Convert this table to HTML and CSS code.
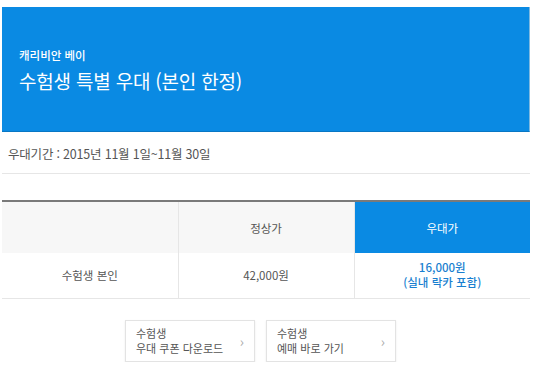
FILE: index.html
```html
<!DOCTYPE html>
<html lang="ko">
<head>
    <meta charset="UTF-8">
    <meta name="viewport" content="width=device-width, initial-scale=1.0">
    <title>수험생 특별 우대</title>
    <link rel="stylesheet" href="styles.css">
</head>
<body>
    <div class="wrap">
        <header class="hero">
            <p class="heroSub">캐리비안 베이</p>
            <h1 class="heroTitle">수험생 특별 우대 (본인 한정)</h1>
        </header>
        <p class="period">우대기간 : 2015년 11월 1일~11월 30일</p>

        <table class="priceTable">
            <thead>
                <tr>
                    <th></th>
                    <th>정상가</th>
                    <th class="sale">우대가</th>
                </tr>
            </thead>
            <tbody>
                <tr>
                    <td>수험생 본인</td>
                    <td>42,000원</td>
                    <td class="salePrice">16,000원<br>(실내 락카 포함)</td>
                </tr>
            </tbody>
        </table>

        <div class="btnGroup">
            <a href="#" class="linkBtn">
                <span class="btnText">
                    <span class="btnLine">수험생</span>
                    <span class="btnLine">우대 쿠폰 다운로드</span>
                </span>
                <i class="arrow">&rsaquo;</i>
            </a>
            <a href="#" class="linkBtn">
                <span class="btnText">
                    <span class="btnLine">수험생</span>
                    <span class="btnLine">예매 바로 가기</span>
                </span>
                <i class="arrow">&rsaquo;</i>
            </a>
        </div>
    </div>
</body>
</html>
```

FILE: styles.css
```css
*{
    margin: 0;
    padding: 0;
    box-sizing: border-box;
}
body{
    background-color: #fff;
    font-family: "Noto Sans CJK KR", "Noto Sans", sans-serif;
    color: #555;
}
.wrap{
    width: 528px;
    margin: 7px 0 0 2px;
}
.hero{
    height: 125px;
    padding: 41px 0 0 17px;
    background-color: #0a8ae3;
    border-bottom: 1px solid #0877c4;
    border-right: 1px solid #7fb9e0;
    color: #fff;
}
.heroSub{
    font-size: 11.5px;
    line-height: 14px;
    font-weight: 500;
}
.heroTitle{
    margin-top: 6px;
    font-size: 19px;
    line-height: 26px;
    font-weight: 400;
    letter-spacing: -0.2px;
}
.period{
    height: 42px;
    padding-left: 6px;
    font-size: 12.5px;
    line-height: 44px;
    border-bottom: 1px solid #e6e6e6;
    letter-spacing: -0.2px;
}
.priceTable{
    width: 100%;
    margin-top: 26px;
    border-collapse: collapse;
    table-layout: fixed;
    font-size: 11.5px;
    text-align: center;
}
.priceTable thead tr{
    border-top: 2px solid #7a7a7a;
}
.priceTable th{
    height: 52px;
    font-weight: 400;
    background-color: #f7f7f7;
    border-left: 1px solid #e6e6e6;
}
.priceTable th:first-child,
.priceTable td:first-child{
    border-left: 0;
}
.priceTable th.sale{
    background-color: #0a8ae3;
    color: #fff;
}
.priceTable td{
    height: 45px;
    border-left: 1px solid #e6e6e6;
    border-bottom: 1px solid #e6e6e6;
    line-height: 15px;
}
.priceTable td.salePrice{
    color: #1a7fd0;
    font-weight: 500;
}
.btnGroup{
    display: flex;
    gap: 11px;
    margin-top: 21px;
    padding-left: 123px;
}
.linkBtn{
    display: flex;
    align-items: center;
    justify-content: space-between;
    width: 130px;
    height: 42px;
    padding: 0 10px;
    border: 1px solid #e3e3e3;
    box-shadow: 0 1px 2px rgba(0,0,0,0.08);
    color: #555;
    font-size: 11px;
    text-decoration: none;
}
.btnText{
    display: flex;
    flex-direction: column;
}
.btnLine{
    display: block;
    height: 15px;
    line-height: 15px;
    white-space: nowrap;
}
.arrow{
    font-style: normal;
    color: #aaa;
    font-size: 14px;
}
```
